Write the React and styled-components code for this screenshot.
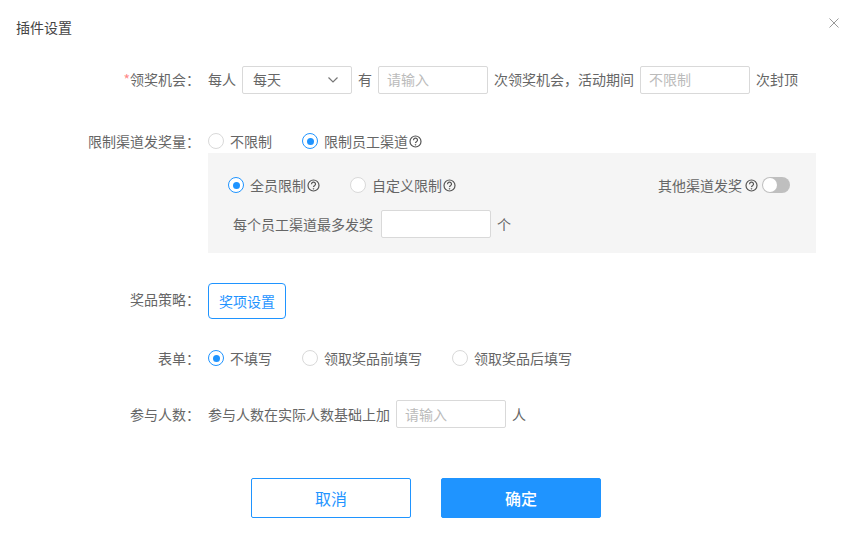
import React from 'react';
import styled, { createGlobalStyle } from 'styled-components';

const Global = createGlobalStyle`
  html, body { margin: 0; padding: 0; background: #fff; }
  body { font-family: "Noto Sans CJK SC", "Liberation Sans", sans-serif; font-size: 14px; color: #666; }
  * { box-sizing: border-box; }
`;
const Dialog = styled.div`width: 852px; height: 553px; overflow: hidden; background: #fff;`;
const Header = styled.header`
  display: flex; justify-content: space-between; align-items: flex-start;
  height: 18px; margin-top: 18px; padding: 0 13px 0 16px;
`;
const Title = styled.h1`margin: 0; font-size: 14px; font-weight: 400; color: #444; line-height: 18px;`;
const Close = styled.svg`width: 10px; height: 10px; stroke: #999; stroke-width: 1; fill: none;`;
const Form = styled.form`display: flex; flex-direction: column; margin-top: 30px;`;
const Row = styled.div`
  display: flex; align-items: ${p => p.$top ? 'flex-start' : 'center'};
  margin-top: ${p => p.$mt || 0}px; min-height: ${p => p.$h || 28}px; width: 816px;
`;
const Label = styled.label`
  flex: 0 0 200px; margin-right: 8px; text-align: right; line-height: 18px; font-size: 14px; color: #666; white-space: nowrap;
  padding-bottom: ${p => p.$lift || 0}px;
`;
const Star = styled.span`color: #f88;`;
const Content = styled.div`flex: 1; display: flex; flex-direction: column; min-width: 0;`;
const Inline = styled.div`display: flex; align-items: center; gap: 6px; font-size: 14px; line-height: 18px; white-space: nowrap;`;
const Lifted = styled.span`padding-bottom: 2px;`;
const Select = styled.div`
  width: 110px; height: 28px; border: 1px solid #d9d9d9; border-radius: 2px; background: #fff; padding-bottom: 2px;
  display: flex; align-items: center; justify-content: space-between; padding-left: 10px; padding-right: 13px; font-size: 14px; color: #666;
`;
const Chevron = styled.svg`width: 10px; height: 6px; margin-top: 2px; stroke: #777; stroke-width: 1.2; fill: none;`;
const Input = styled.div`
  width: 110px; height: 28px; border: 1px solid #d9d9d9; border-radius: 2px; background: #fff;
  display: flex; align-items: center; padding: 0 8px ${p => p.$lift ? 2 : 0}px; font-size: 14px; color: #bbb; flex: none;
`;
const RadioGroup = styled.div`display: flex; align-items: center; height: 18px; gap: 30px;`;
const RadioItem = styled.span`display: flex; align-items: center; font-size: 14px; line-height: 18px; color: #666; white-space: nowrap;`;
const Dot = styled.i`
  width: 16px; height: 16px; border-radius: 50%; flex: none; display: block; background: #fff; margin-right: 6px;
  border: 1px solid ${p => p.$on ? '#1f94ff' : '#d9d9d9'}; position: relative;
  &::after {
    content: ''; display: ${p => p.$on ? 'block' : 'none'}; position: absolute; left: 3.5px; top: 3.5px;
    width: 7px; height: 7px; border-radius: 50%; background: #1f94ff;
  }
`;
const Help = styled.svg`width: 13px; height: 13px; flex: none; margin-left: 1px; fill: none; stroke: #555;`;
const Panel = styled.div`
  margin-top: 3px; height: 100px; background: #f5f5f5; padding: 23px 26px 0 20px; display: flex; flex-direction: column;
`;
const PanelTop = styled.div`display: flex; justify-content: space-between; align-items: center; height: 18px;`;
const Other = styled.div`display: flex; align-items: center; font-size: 14px; line-height: 18px; white-space: nowrap;`;
const OtherHelp = styled(Help)`margin: 0 4px 0 3px; width: 13px; height: 13px;`;
const Toggle = styled.span`
  width: 28px; height: 16px; border-radius: 8px; background: #bfbfbf; position: relative; display: block;
  &::after { content: ''; position: absolute; left: 1px; top: 1px; width: 14px; height: 14px; border-radius: 50%; background: #fff; }
`;
const PanelRow = styled(Inline)`margin-top: 16px; padding-left: 5px; gap: 8px;`;
const Unit = styled.span`margin-left: -2px;`;
const PrizeBtn = styled.button`
  width: 78px; height: 36px; border: 1px solid #1f94ff; border-radius: 4px; background: #fff; color: #1f94ff;
  font: inherit; font-size: 14px; padding: 0;
`;
const Footer = styled.footer`display: flex; gap: 30px; margin: 50px 0 0 251px;`;
const Btn = styled.button`
  width: 160px; height: 40px; border-radius: 2px; border: 1px solid #1f94ff; font: inherit; font-size: 16px; padding: 0;
  font-weight: ${p => p.$primary ? 500 : 400};
  background: ${p => p.$primary ? '#1f94ff' : '#fff'}; color: ${p => p.$primary ? '#fff' : '#1f94ff'};
`;

const HelpIcon = ({ as: C = Help }) => (
  <C viewBox="0 0 13 13">
    <circle cx="6.5" cy="6.5" r="5.5" strokeWidth="1.2" />
    <path d="M4.5 5.2a2 2 0 1 1 3 1.6c-.7.4-1 .7-1 1.3" strokeWidth="1.2" />
    <circle cx="6.5" cy="9.8" r=".4" strokeWidth=".9" />
  </C>
);

export default function App() {
  return (
    <Dialog>
      <Global />
      <Header>
        <Title>插件设置</Title>
        <Close viewBox="0 0 10 10"><path d="M.5.5l9 9M9.5.5l-9 9" /></Close>
      </Header>
      <Form>
        <Row>
          <Label $lift={2}><Star>*</Star>领奖机会：</Label>
          <Inline>
            <Lifted>每人</Lifted>
            <Select>每天<Chevron viewBox="0 0 10 6"><path d="M.5.5l4.5 4.5 4.5-4.5" /></Chevron></Select>
            <Lifted>有</Lifted>
            <Input $lift>请输入</Input>
            <Lifted>次领奖机会，活动期间</Lifted>
            <Input $lift>不限制</Input>
            <Lifted>次封顶</Lifted>
          </Inline>
        </Row>
        <Row $top $mt={38} $h={121}>
          <Label>限制渠道发奖量：</Label>
          <Content>
            <RadioGroup>
              <RadioItem><Dot />不限制</RadioItem>
              <RadioItem><Dot $on />限制员工渠道<HelpIcon /></RadioItem>
            </RadioGroup>
            <Panel>
              <PanelTop>
                <RadioGroup>
                  <RadioItem><Dot $on />全员限制<HelpIcon /></RadioItem>
                  <RadioItem><Dot />自定义限制<HelpIcon /></RadioItem>
                </RadioGroup>
                <Other>其他渠道发奖<HelpIcon as={OtherHelp} /><Toggle /></Other>
              </PanelTop>
              <PanelRow>每个员工渠道最多发奖<Input /><Unit>个</Unit></PanelRow>
            </Panel>
          </Content>
        </Row>
        <Row $mt={30} $h={36}>
          <Label $lift={4}>奖品策略：</Label>
          <PrizeBtn type="button">奖项设置</PrizeBtn>
        </Row>
        <Row $mt={30} $h={18}>
          <Label>表单：</Label>
          <RadioGroup>
            <RadioItem><Dot $on />不填写</RadioItem>
            <RadioItem><Dot />领取奖品前填写</RadioItem>
            <RadioItem><Dot />领取奖品后填写</RadioItem>
          </RadioGroup>
        </Row>
        <Row $mt={33}>
          <Label>参与人数：</Label>
          <Inline>参与人数在实际人数基础上加<Input>请输入</Input>人</Inline>
        </Row>
        <Footer>
          <Btn type="button">取消</Btn>
          <Btn type="button" $primary>确定</Btn>
        </Footer>
      </Form>
    </Dialog>
  );
}
